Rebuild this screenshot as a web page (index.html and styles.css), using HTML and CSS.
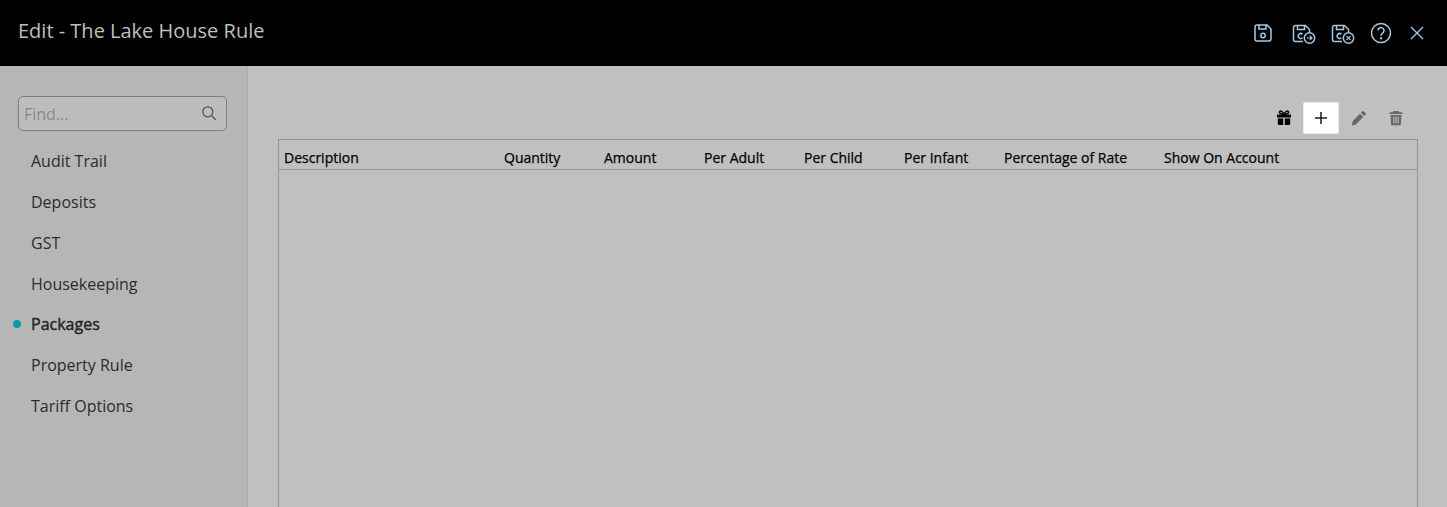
FILE: index.html
```html
<!DOCTYPE html>
<html lang="en">
<head>
    <meta charset="UTF-8">
    <meta name="viewport" content="width=device-width, initial-scale=1.0">
    <title>Edit - The Lake House Rule</title>
    <link rel="stylesheet" href="styles.css">
</head>
<body>
    <header class="topbar">
        <h1 class="topbar-title">Edit - The Lake House Rule</h1>
        <div class="topbar-actions">
            <button class="top-btn top-btn-save" title="Save">
                <svg width="24" height="24" viewBox="0 0 24 24" fill="none" stroke="#a5c9e3" stroke-width="1.5">
                    <path d="M6 4h10l4 4v10a2 2 0 0 1-2 2H6a2 2 0 0 1-2-2V6a2 2 0 0 1 2-2z"/>
                    <path d="M8 4v4h7V4"/>
                    <circle cx="12" cy="14.5" r="2.2"/>
                </svg>
            </button>
            <button class="top-btn" title="Save and continue">
                <svg width="26" height="24" viewBox="0 0 26 24" fill="none" stroke="#a5c9e3" stroke-width="1.5">
                    <path d="M12 20.500H4.500a2 2 0 0 1-2-2v-12a2 2 0 0 1 2-2h10l4 4v3"/>
                    <path d="M6.500 4.500v4h7v-4"/>
                    <path d="M11.500 13.200a2.500 2.500 0 1 0 0 3.600"/>
                    <circle cx="18.500" cy="17" r="5.200"/>
                    <path d="M15.800 17h5.200M18.800 14.800l2.200 2.200-2.200 2.200" stroke-width="1.200"/>
                </svg>
            </button>
            <button class="top-btn" title="Save and close">
                <svg width="26" height="24" viewBox="0 0 26 24" fill="none" stroke="#a5c9e3" stroke-width="1.5">
                    <path d="M12 20.500H4.500a2 2 0 0 1-2-2v-12a2 2 0 0 1 2-2h10l4 4v3"/>
                    <path d="M6.500 4.500v4h7v-4"/>
                    <path d="M11.500 13.200a2.500 2.500 0 1 0 0 3.600"/>
                    <circle cx="18.500" cy="17" r="5.200"/>
                    <path d="M16.400 14.900l4.200 4.200M20.600 14.900l-4.200 4.200" stroke-width="1.200"/>
                </svg>
            </button>
            <button class="top-btn" title="Help">
                <svg width="24" height="24" viewBox="0 0 24 24" fill="none" stroke="#a5c9e3" stroke-width="1.5">
                    <circle cx="12" cy="12" r="9.500"/>
                    <path d="M9 9.600a3 3 0 1 1 4.600 2.500c-1 .7-1.600 1.200-1.600 2.600"/>
                    <circle cx="12" cy="17.200" r=".5"/>
                </svg>
            </button>
            <button class="top-btn top-btn-close" title="Close">
                <svg width="24" height="24" viewBox="0 0 24 24" fill="none" stroke="#a5c9e3" stroke-width="1.4">
                    <path d="M6 6l12 12M18 6L6 18"/>
                </svg>
            </button>
        </div>
    </header>

    <div class="content">
        <aside class="sidebar">
            <div class="search">
                <input type="text" class="search-input" placeholder="Find...">
                <svg class="search-icon" width="16" height="16" viewBox="0 0 16 16" fill="none" stroke="#555" stroke-width="1.3">
                    <circle cx="6.800" cy="6.800" r="5"/>
                    <path d="M10.500 10.500l4.200 4.200"/>
                </svg>
            </div>
            <nav class="side-nav">
                <a href="#" class="side-link">Audit Trail</a>
                <a href="#" class="side-link">Deposits</a>
                <a href="#" class="side-link">GST</a>
                <a href="#" class="side-link">Housekeeping</a>
                <a href="#" class="side-link active">Packages</a>
                <a href="#" class="side-link">Property Rule</a>
                <a href="#" class="side-link">Tariff Options</a>
            </nav>
        </aside>

        <main class="main">
            <div class="toolbar">
                <button class="tool-btn" title="Packages">
                    <svg width="16" height="16" viewBox="0 0 16 16" fill="#000">
                        <path d="M1 4.500h14v3H1zM1.800 8.500h5.400V15H2.800a1 1 0 0 1-1-1zM8.800 8.500h5.400V14a1 1 0 0 1-1 1H8.800z"/>
                        <path d="M8 4.500C6.500 1 4.600.6 3.800 1.400 2.800 2.400 4 4.500 8 4.500zM8 4.500c1.500-3.500 3.400-3.900 4.200-3.100 1 1-.2 3.100-4.200 3.100z" fill="none" stroke="#000" stroke-width="1.500"/>
                    </svg>
                </button>
                <button class="tool-btn tool-btn-on" title="Add">
                    <svg width="16" height="16" viewBox="0 0 16 16" fill="none" stroke="#1f1414" stroke-width="1.500">
                        <path d="M8 2v12M2 8h12"/>
                    </svg>
                </button>
                <button class="tool-btn" title="Edit">
                    <svg width="16" height="16" viewBox="0 0 16 16" fill="#666">
                        <path d="M11.300 1.300a1 1 0 0 1 1.400 0l1.900 1.900a1 1 0 0 1 0 1.400l-1.400 1.400-3.300-3.300zM8.900 3.700l3.300 3.300-7.500 7.500-3.900.9.900-4.200z"/>
                    </svg>
                </button>
                <button class="tool-btn" title="Delete">
                    <svg width="16" height="16" viewBox="0 0 16 16" fill="#666">
                        <path d="M5.500 1h5l.5 1.300h3.500v1.700h-13V2.300H5zM2.500 5h11l-.6 9.300a1 1 0 0 1-1 .9H4.100a1 1 0 0 1-1-.9zM5.300 6.500v7h1.100v-7zM7.450 6.500v7h1.100v-7zM9.600 6.500v7h1.100v-7z" fill-rule="evenodd"/>
                    </svg>
                </button>
            </div>
            <div class="grid">
                <div class="grid-head">
                    <div class="col col-desc">Description</div>
                    <div class="col">Quantity</div>
                    <div class="col">Amount</div>
                    <div class="col">Per Adult</div>
                    <div class="col">Per Child</div>
                    <div class="col">Per Infant</div>
                    <div class="col col-pct">Percentage of Rate</div>
                    <div class="col">Show On Account</div>
                </div>
            </div>
        </main>
    </div>
</body>
</html>
```

FILE: styles.css
```css
html, body {
    height: 100%;
}
body {
    font-family: 'Open Sans', 'Noto Sans', sans-serif;
    background-color: #c0c0c0;
    margin: 0;
    padding: 0;
    overflow: hidden;
    display: flex;
    flex-direction: column;
}
button {
    font-family: inherit;
    background: none;
    border: none;
    padding: 0;
    cursor: pointer;
}
.topbar {
    flex: none;
    height: 66px;
    background-color: #000;
    display: flex;
    align-items: center;
    justify-content: space-between;
    padding: 0 18px;
}
.topbar-title {
    margin: 0 0 6px;
    font-size: 20px;
    font-weight: 400;
    color: #bfbfbf;
}
.topbar-actions {
    display: flex;
    align-items: center;
    gap: 13px;
    margin-bottom: 1px;
}
.top-btn {
    height: 24px;
    display: flex;
    align-items: center;
    justify-content: center;
}
.top-btn-save {
    margin-right: 3px;
}
.top-btn-close {
    margin-left: -1px;
}
.content {
    flex: 1;
    display: flex;
    min-height: 0;
}
.sidebar {
    flex: none;
    width: 248px;
    background-color: #b6b6b6;
    border-right: 1px solid #aeaeae;
    padding: 30px 20px 0 18px;
    box-sizing: border-box;
}
.search {
    position: relative;
    margin-bottom: 10.2px;
}
.search-input {
    display: block;
    width: 100%;
    height: 35px;
    box-sizing: border-box;
    padding: 0 30px 0 5px;
    border: 1px solid #7d7d7d;
    border-radius: 5px;
    background-color: #bdbdbd;
    font-family: inherit;
    font-size: 16px;
    color: #333;
}
.search-input::placeholder {
    color: #8a8a8a;
    opacity: 1;
}
.search-icon {
    position: absolute;
    top: 9px;
    right: 10px;
}
.side-nav {
    display: flex;
    flex-direction: column;
}
.side-link {
    position: relative;
    display: block;
    height: 40.8px;
    line-height: 40px;
    padding-left: 13px;
    font-size: 16px;
    color: #2c2c2c;
    text-decoration: none;
}
.side-link.active {
    font-weight: 500;
    -webkit-text-stroke: 0.4px #222;
    color: #222;
}
.side-link.active::before {
    content: "";
    position: absolute;
    left: -5px;
    top: 16px;
    width: 8px;
    height: 8px;
    border-radius: 50%;
    background-color: #0c9ba6;
}
.main {
    flex: 1;
    min-width: 0;
    display: flex;
    flex-direction: column;
    padding: 36px 29px 0 30px;
}
.toolbar {
    flex: none;
    display: flex;
    justify-content: flex-end;
    gap: 1.33px;
    padding-right: 4px;
    margin-bottom: 5px;
}
.tool-btn {
    width: 36px;
    height: 32px;
    display: flex;
    align-items: center;
    justify-content: center;
    border-radius: 2px;
    box-sizing: border-box;
}
.tool-btn-on {
    background-color: #fff;
    border: 1px solid #ececec;
}
.grid {
    flex: 1;
    min-height: 0;
    border: 1px solid #959595;
    border-bottom: none;
}
.grid-head {
    display: flex;
    height: 23px;
    align-items: center;
    border-bottom: 1px solid #959595;
    padding-top: 6px;
}
.col {
    flex: none;
    width: 100px;
    padding-left: 5px;
    box-sizing: border-box;
    font-size: 14px;
    font-weight: 500;
    -webkit-text-stroke: 0.25px #000;
    color: #000;
    white-space: nowrap;
}
.col-desc {
    width: 220px;
}
.col-pct {
    width: 160px;
}
```
